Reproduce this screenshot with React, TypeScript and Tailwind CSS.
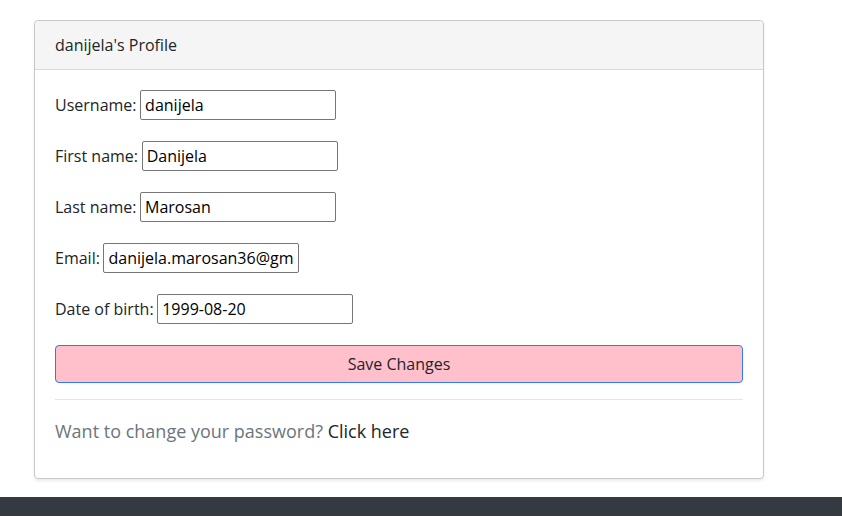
import React, { useState } from 'react';

const fields = [
  { label: 'Username:', value: 'danijela' },
  { label: 'First name:', value: 'Danijela' },
  { label: 'Last name:', value: 'Marosan' },
  { label: 'Email:', value: 'danijela.marosan36@gmail.com' },
  { label: 'Date of birth:', value: '1999-08-20' },
];

const App: React.FC = () => {
  const [values, setValues] = useState<string[]>(fields.map((f) => f.value));

  return (
    <div className="min-h-[516px] bg-white flex flex-col text-[#212529]" style={{ fontFamily: '"Open Sans", sans-serif' }}>
      <div className="pt-5 pl-[34px] pb-[18px]">
        <div className="w-[730px] border border-[#c8c8c8] rounded-[4px] shadow-[0_2px_3px_rgba(0,0,0,0.08)] bg-white">
          <div className="h-[49px] px-5 flex items-center bg-[#f5f5f5] border-b border-[#d9d9d9] rounded-t-[4px] text-[16px]">
            danijela's Profile
          </div>
          <div className="px-5 pt-5 pb-[33px]">
            <div className="flex flex-col gap-[21px]">
              {fields.map((f, i) => (
                <div key={f.label} className="flex items-center h-[30px] text-[16px]">
                  <label className="mr-[3.6px]">{f.label}</label>
                  <input
                    className="w-[196px] h-[30px] border border-[#767676] rounded-[2px] px-[4px] text-[16px] text-black outline-none"
                    value={values[i]}
                    onChange={(e) => {
                      const next = [...values];
                      next[i] = e.target.value;
                      setValues(next);
                    }}
                  />
                </div>
              ))}
            </div>
            <button className="mt-[21px] w-full h-[38px] bg-[#ffc0cb] border border-[#2f7bf5] rounded-[4px] text-[16px] text-[#212529]">
              Save Changes
            </button>
            <hr className="mt-4 border-t border-[#e5e5e5]" />
            <p className="mt-[18px] text-[18px] text-[#6c757d]">
              Want to change your password? <a className="text-[#212529] cursor-pointer">Click here</a>
            </p>
          </div>
        </div>
      </div>
      <div className="flex-1 bg-[#343a40]" />
    </div>
  );
};

export default App;
